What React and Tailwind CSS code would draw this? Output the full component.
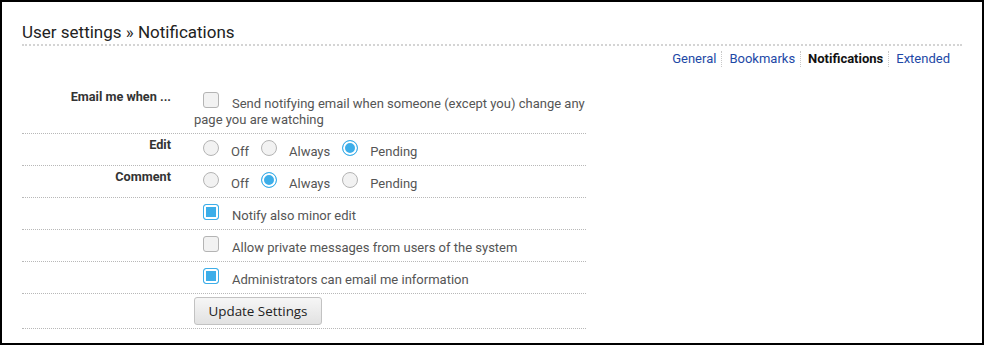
import React from 'react';

function Box({ checked, round }) {
  const shape = round ? 'rounded-full' : 'rounded-[3px]';
  const look = checked
    ? 'border-[#3daee9] bg-[#3daee9] shadow-[inset_0_0_0_2px_#ffffff]'
    : 'border-[#b4b4b4] bg-[#f2f2f2]';
  return <span className={`inline-block w-4 h-4 border ${shape} ${look} align-baseline`} />;
}

function Option({ checked, label, round, first }) {
  return (
    <span className={first ? 'ml-[9px]' : 'ml-[12px]'}>
      <Box checked={checked} round={round} />
      <span className={round ? 'ml-[12px]' : 'ml-[13px]'}>{label}</span>
    </span>
  );
}

function Row({ label, children, last, top = 'pt-[6px]', labelTop = 'pt-[3px]' }) {
  return (
    <div className="grid grid-cols-[164px_400px] border-b border-dotted border-[#b8b8b8]">
      <div className={`text-right pr-[15px] ${labelTop} font-bold text-[12.7px] leading-4 text-[#333]`}>{label}</div>
      <div className={last ? 'py-[3px]' : `pl-[8px] ${top} pb-[5px]`}>{children}</div>
    </div>
  );
}

export default function App() {
  const tabs = ['General', 'Bookmarks', 'Notifications', 'Extended'];
  return (
    <div
      className="w-[984px] h-[345px] border-2 border-black bg-white px-[20px] text-[13px] text-[#555]"
      style={{ fontFamily: 'Roboto, "Liberation Sans", sans-serif' }}
    >
      <h1 className="pt-[20px] pb-[2px] text-[17px] leading-5 text-[#222] border-b-2 border-dotted border-[#d4d4d4]">
        User settings » Notifications
      </h1>
      <div className="flex justify-end pr-[12px] pt-[5px]">
        {tabs.map((t, i) => (
          <a
            key={t}
            href="#"
            className={`leading-4 ${i > 0 ? 'pl-[7px] border-l border-dotted border-[#c8c8c8]' : ''} ${i === tabs.length - 1 ? '' : 'pr-[5px]'} ${t === 'Notifications' ? 'font-bold text-[#111]' : 'text-[#1d48a6]'}`}
          >
            {t}
          </a>
        ))}
      </div>
      <div className="mt-[18px] w-[564px]">
        <Row label="Email me when ..." top="pt-[7px]" labelTop="pt-[4px]">
          <div className="leading-4">
            <span className="ml-[9px]"><Box /></span>
            <span className="ml-[13px]">Send notifying email when someone (except you) change any page you are watching</span>
          </div>
        </Row>
        <Row label="Edit">
          <div className="leading-4">
            <Option round first label="Off" />
            <Option round label="Always" />
            <Option round checked label="Pending" />
          </div>
        </Row>
        <Row label="Comment">
          <div className="leading-4">
            <Option round first label="Off" />
            <Option round checked label="Always" />
            <Option round label="Pending" />
          </div>
        </Row>
        <Row label="">
          <div className="leading-4"><Option first checked label="Notify also minor edit" /></div>
        </Row>
        <Row label="">
          <div className="leading-4"><Option first label="Allow private messages from users of the system" /></div>
        </Row>
        <Row label="">
          <div className="leading-4"><Option first checked label="Administrators can email me information" /></div>
        </Row>
        <Row label="" last>
          <div className="pl-[8px]">
            <button
              className="w-[128px] h-[28px] rounded-[3px] border border-[#c2c2c2] bg-gradient-to-b from-[#f6f6f6] to-[#e2e2e2] text-[13.4px] text-[#222]"
              style={{ fontFamily: '"Open Sans", "Noto Sans", sans-serif' }}
            >
              Update Settings
            </button>
          </div>
        </Row>
      </div>
    </div>
  );
}
